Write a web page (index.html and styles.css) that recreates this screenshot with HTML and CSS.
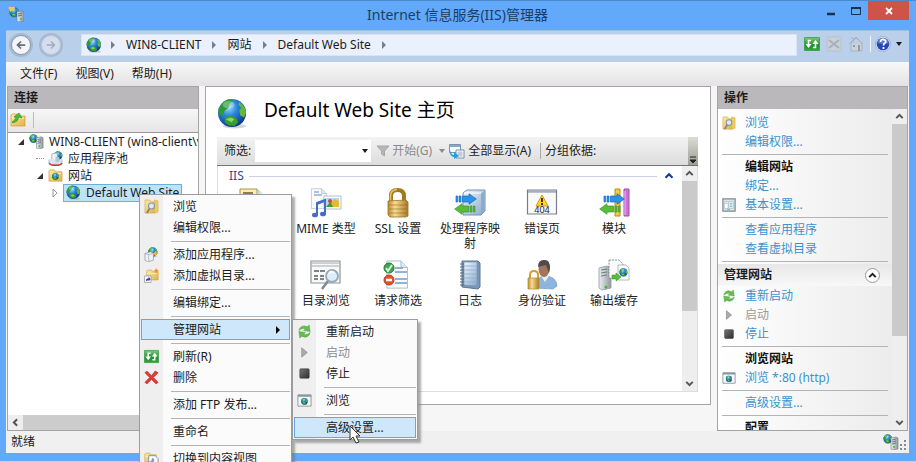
FILE: index.html
```html
<!DOCTYPE html>
<html lang="zh-CN">
<head>
<meta charset="utf-8">
<meta name="viewport" content="width=device-width, initial-scale=1">
<title>Internet 信息服务(IIS)管理器</title>
<link rel="stylesheet" href="styles.css">
</head>
<body>
<svg class="sprite" aria-hidden="true">
  <defs>
    <radialGradient id="sea" cx=".38" cy=".3" r=".75"><stop offset="0" stop-color="#9adcff"/><stop offset=".4" stop-color="#2a86dc"/><stop offset="1" stop-color="#0b2f86"/></radialGradient>
    <linearGradient id="gold" x2="1" y2="1"><stop offset="0" stop-color="#ffe9a0"/><stop offset="1" stop-color="#e0b04a"/></linearGradient>
    <linearGradient id="brass"><stop offset="0" stop-color="#b98a30"/><stop offset=".35" stop-color="#f8dc92"/><stop offset="1" stop-color="#a87a24"/></linearGradient>
    <linearGradient id="steel"><stop offset="0" stop-color="#eceff0"/><stop offset="1" stop-color="#8f999e"/></linearGradient>
    <linearGradient id="ice" x2="1" y2="1"><stop offset="0" stop-color="#f2f8fd"/><stop offset="1" stop-color="#86a8cc"/></linearGradient>
    <linearGradient id="leaf" x2="0" y2="1"><stop offset="0" stop-color="#7ccb78"/><stop offset=".6" stop-color="#1d9130"/><stop offset="1" stop-color="#2fa83a"/></linearGradient>
    <linearGradient id="coal" x2="1" y2="1"><stop offset="0" stop-color="#777"/><stop offset="1" stop-color="#2b2b2b"/></linearGradient>
  </defs>
  <symbol id="globe" viewBox="0 0 32 32">
    <ellipse cx="18" cy="29" rx="12" ry="2.500" fill="#888" opacity=".35"/>
    <circle cx="15.500" cy="15.500" r="14.500" fill="url(#sea)"/>
    <path d="M3 9Q6 2 14 1l3 2-4 3-1 4-4 3-2 5-4-1Q0 13 3 9z" fill="#2f9a35"/>
    <path d="M23 4q6 4 7 11l-2 5-4-2-1-5 2-3-3-3z" fill="#63b83b"/>
    <path d="M8 20l6-2 6 3 2 4-4 4-6-1-4-3z" fill="#379f2e"/>
    <path d="M9 22l5-2 4 2-3 3z" fill="#92d45c"/>
    <ellipse cx="12" cy="7" rx="6" ry="4" fill="#fff" opacity=".3"/>
  </symbol>
  <symbol id="server" viewBox="0 0 16 16">
    <use href="#globe" width="10" height="10"/>
    <path d="M8 4l5-1 2 1v11l-6 1-1-1z" fill="url(#steel)" stroke="#747d80" stroke-width=".6"/>
    <path d="M9 6l4-1M9 8l4-1M9 10l4-1" stroke="#5e686c" stroke-width=".8"/><circle cx="11" cy="13" r="1" fill="#3ec13a"/>
  </symbol>
  <symbol id="app" viewBox="0 0 16 16">
    <path d="M1 1l5 5" stroke="#e3b63c" stroke-width="3"/><use href="#globe" x="1" y="1" width="11" height="11"/>
    <path d="M1 1h6l-1 3-4 2z" fill="#f2c850"/><path d="M9 6l5-1 2 1v9l-6 1-1-1z" fill="url(#steel)" stroke="#727b80" stroke-width=".6"/>
    <path d="M10 8l4-1M10 10l4-1" stroke="#65707a"/><circle cx="13" cy="13" r="1" fill="#3ec13a"/>
  </symbol>
  <symbol id="pool" viewBox="0 0 16 16">
    <use href="#globe" x="6" y="0" width="10" height="10"/><path d="M4 3l5-1 1 2v8H4z" fill="#eef1f5" stroke="#8b98a8" stroke-width=".7"/>
    <path d="M1 9v4q3 3 7 1 4 2 7 0V9" fill="#d9e6f2" stroke="#91a5b9" stroke-width=".7"/><path d="M1 13q3 3 7 2 4 1 7-2" fill="none" stroke="#c8382f" stroke-width="1.500"/><path d="M8 6v6h4V7z" fill="#b4c5d5"/>
  </symbol>
  <symbol id="folder" viewBox="0 0 16 16"><path d="M1 3l1-1h5l1 2h7v10H1z" fill="url(#gold)" stroke="#cb9d3c" stroke-width=".7"/><path d="M2 6h12" stroke="#fff3c4"/></symbol>
  <symbol id="sites" viewBox="0 0 16 16"><use href="#folder" width="16" height="16"/><use href="#globe" x="4" y="5" width="8" height="8"/></symbol>
  <symbol id="connect" viewBox="0 0 16 16"><use href="#folder" width="16" height="16"/><path d="M2 10q3-1 4-5L4 5l5-4 3 5-3-1q-1 5-6 6z" fill="#4dba38" stroke="#2e8b21" stroke-width=".6"/></symbol>
  <symbol id="explore" viewBox="0 0 16 16"><path d="M1 1h5l2 2h4v12H1z" fill="url(#gold)" stroke="#cfa340" stroke-width=".6"/><path d="M11 1l4 1v12l-4 1z" fill="#efcb62" stroke="#cfa340" stroke-width=".5"/><circle cx="8" cy="7.500" r="3.200" fill="#d9edf8" stroke="#8797a2" stroke-width="1.200"/><path d="M6 10l-3 5" stroke="#76808a" stroke-width="1.800"/></symbol>
  <symbol id="addapp" viewBox="0 0 16 16"><use href="#globe" x="4" y="0" width="11" height="11"/><path d="M1 7l6-2 3 2v7l-6 2-3-2z" fill="#eef2f4" stroke="#8f9aa1" stroke-width=".8"/><path d="M1 7l4 1v7M5 8l5-1" fill="none" stroke="#a0adb6" stroke-width=".8"/><path d="M12 4l1 2 3 1-3 1-1 3-1-3-3-1 3-1z" fill="#ffb52b"/></symbol>
  <symbol id="addvdir" viewBox="0 0 16 16"><use href="#folder" x="2" y="0" width="14" height="15"/><path d="M13 0l1 2 2 1-2 1-1 2-1-2-2-1 2-1z" fill="#f78d1e"/><path d="M.500 8.500h7v7h-7z" fill="#fff" stroke="#999" stroke-width=".8"/><path d="M2 14q0-3 3-3V9l2 3-2 2v-1q-2 0-3 1z" fill="#3434c4"/></symbol>
  <symbol id="refresh" viewBox="0 0 16 16"><path d="M.500 1.500h15v13H.500z" fill="url(#leaf)" stroke="#3a9a45" stroke-width=".8"/><path d="M7 4.500H4.500V9M9 11.500h2.500V7" fill="none" stroke="#fff" stroke-width="1.600"/><path d="M1.500 8h6l-3 4zM8.500 8h6l-3-4z" fill="#fff"/></symbol>
  <symbol id="delete" viewBox="0 0 16 16"><path d="M1 3l2-2 5 5 4-5 3 2-5 5 5 5-2 2-5-5-5 5-2-2 5-5z" fill="#e43a35" stroke="#b51f20" stroke-width=".6"/></symbol>
  <symbol id="content" viewBox="0 0 16 16"><use href="#folder" width="14" height="15"/><path d="M5 5h7l3 3v7H5z" fill="#fff" stroke="#83909a"/><path d="M3 11q5 2 6-4l2 2q0 5-6 6z" fill="#63a6d8"/></symbol>
  <symbol id="restart" viewBox="0 0 16 16"><path d="M2 7q1-5 6-5l3 1 2-2 1 7-7-1 2-2q-4-1-7 2z" fill="#65bd50" stroke="#4ba13c" stroke-width=".5"/><path d="M14 9q-1 5-6 5l-3-1-2 2-1-7 7 1-2 2q4 1 7-2z" fill="#65bd50" stroke="#4ba13c" stroke-width=".5"/></symbol>
  <symbol id="play" viewBox="0 0 16 16"><path d="M5 3l6 5-6 5z" fill="#aaa" stroke="#888" stroke-width=".7"/></symbol>
  <symbol id="stop" viewBox="0 0 16 16"><rect x="3" y="3" width="10" height="10" rx="1" fill="url(#coal)" stroke="#333" stroke-width=".6"/></symbol>
  <symbol id="browse" viewBox="0 0 16 16"><path d="M1 2h14v12H1z" fill="#f7fafb" stroke="#8b959a"/><path d="M1 3h14" stroke="#8995a0" stroke-width="2"/><use href="#globe" x="4" y="5" width="8" height="8"/></symbol>
  <symbol id="settings" viewBox="0 0 16 16"><path d="M1 1h14v14H1z" fill="#dde4e7" stroke="#7f898c" stroke-width="1.400"/><path d="M3 4h4v8H3zM8 4h5v8H8z" fill="#fff" stroke="#a8b5bb" stroke-width=".7"/><path d="M4 6h2M9 6h3M9 8h3M9 10h3M6 13h3" stroke="#55aeca"/></symbol>
  <symbol id="chevron" viewBox="0 0 16 16"><path d="M4 10l4-4 4 4" fill="none" stroke="currentColor" stroke-width="2.500"/></symbol>
  <symbol id="caret" viewBox="0 0 8 8"><path d="M1 2h6L4 6z" fill="currentColor"/></symbol>
  <symbol id="crumb" viewBox="0 0 8 8"><path d="M2 0l4 4-4 4z" fill="#73808c"/></symbol>
  <symbol id="blue-arrow" viewBox="0 0 22 12"><path d="M1 3h1.500v6H1zM4 3h2v6H4zM7.500 3H14V.700L21.300 6 14 11.300V9H7.500z" fill="#2994e6" stroke="#1a6cc0" stroke-width=".7"/></symbol>
  <symbol id="green-arrow" viewBox="0 0 22 12"><path d="M21 3h-1.500v6H21zM18 3h-2v6h2zM14.500 3H8V.700L.700 6 8 11.300V9h6.500z" fill="#59bd39" stroke="#3b9629" stroke-width=".7"/></symbol>
  <symbol id="lock" viewBox="0 0 32 32"><path d="M9 15V9q0-6 6.500-6T22 9v6" fill="none" stroke="#a27b1f" stroke-width="4"/><path d="M8.500 14V9q0-6 6.500-6.500" fill="none" stroke="#e6c665" stroke-width="1.500"/><path d="M6 14l18-1 2 2v14l-2 1H8l-2-2z" fill="url(#brass)" stroke="#9b722a" stroke-width=".8"/><path d="M7 18h18M7 22h18M7 26h18" stroke="#855e16" opacity=".5"/></symbol>
  <symbol id="page" viewBox="0 0 32 32"><path d="M2 1h15l7 7v22H2z" fill="#f9fbff" stroke="#aebbc8"/><path d="M17 1v7h7" fill="#dfe8f1" stroke="#aebbc8"/></symbol>
  <symbol id="docs" viewBox="0 0 32 32"><use href="#page" x="7" width="26" height="31"/><path d="M2 2h17v25H2z" fill="#f8edb4" stroke="#a99552"/><path d="M5 6h10M5 10h11" stroke="#8f8140" stroke-width="2"/></symbol>
  <symbol id="mime" viewBox="0 0 32 32"><use href="#page" x="0" y="0" width="22" height="24"/><path d="M4 5h5M4 8h8" stroke="#8eb0da" stroke-width="1.500"/><path d="M14 9h17v13H14z" fill="#fff" stroke="#9faeba" stroke-width=".8"/><path d="M16 11h13v9H16z" fill="#b4d7ef"/><path d="M16 20l5-6 5 6z" fill="#3f9c35"/><path d="M21 16l3-4 5 2v6h-6z" fill="#e4bc2b"/><circle cx="20" cy="14" r="2" fill="#df432d"/><path d="M7 28V16l8-3v14" fill="none" stroke="#456bcb" stroke-width="2"/><path d="M7 16l8-3v2l-8 3z" fill="#456bcb"/><ellipse cx="5" cy="28" rx="3" ry="2.300" fill="#456bcb"/><ellipse cx="13" cy="27" rx="3" ry="2.300" fill="#456bcb"/></symbol>
  <symbol id="handler" viewBox="0 0 32 32"><path d="M9 6l4-3h18v21l-4 4H9z" fill="url(#ice)" stroke="#7794b2"/><path d="M27 7v20l4-4V3z" fill="#8dabca"/><path d="M10 6h17" stroke="#fff"/><use href="#blue-arrow" x="1" y="6" width="22" height="12"/><use href="#green-arrow" x="0" y="16" width="22" height="12"/></symbol>
  <symbol id="error" viewBox="0 0 32 32"><path d="M1.500 3h29v24h-29z" fill="#fafafa" stroke="#787f89" stroke-width="1.200"/><path d="M2 4.500h28" stroke="#a3adc2" stroke-width="2.500"/><path d="M16 8l6 11H10z" fill="#ffd630" stroke="#d39c11"/><path d="M16 11v4M16 16v2" stroke="#222" stroke-width="1.800"/><text class="code404" x="16" y="26" text-anchor="middle">404</text></symbol>
  <symbol id="modules" viewBox="0 0 32 32"><path d="M17 2h5v27h-5z" fill="#f5cc3a" stroke="#b58c1b"/><path d="M26 2h5v27h-5z" fill="#cf70d8" stroke="#9652a4"/><path d="M27 4v24" stroke="#f0b8f0"/><use href="#blue-arrow" x="5" y="6" width="22" height="12"/><use href="#green-arrow" x="1" y="16" width="22" height="12"/></symbol>
  <symbol id="directory" viewBox="0 0 32 32"><path d="M1 2h29v22H1z" fill="#f8f8f6" stroke="#8e9498" stroke-width="1.200"/><path d="M2 4h27M2 7h27" stroke="#bfc4c8" stroke-width="1.500"/><path d="M4 12h5M10 12h5M4 17h4M10 17h4M4 20h4M10 20h4" stroke="#555c61" stroke-width="1.500"/><path d="M18 22l-6 8" stroke="#7f8990" stroke-width="2.500"/><circle cx="22" cy="17" r="6" fill="#dceefb" stroke="#97a9b7" stroke-width="1.800"/><path d="M19 15q2-4 5-1" stroke="#fff" stroke-width="2" fill="none"/></symbol>
  <symbol id="filtering" viewBox="0 0 32 32"><use href="#page" x="3" y="0" width="30" height="32"/><path d="M13 9h8M13 13h12M13 20h12M13 24h12" stroke="#6d9ccc" stroke-width="1.500"/><circle cx="7" cy="9" r="5" fill="#42a451" stroke="#217b31"/><path d="M4 9l2 3 4-6" fill="none" stroke="#d9f5dc" stroke-width="2"/><circle cx="7" cy="21" r="5" fill="#df532e" stroke="#bf381d"/><path d="M4 21h6" stroke="#fff" stroke-width="2.500"/></symbol>
  <symbol id="log" viewBox="0 0 32 32"><path d="M8 2h16l2 2v24l-2 2-16-2z" fill="#7896b7" stroke="#5c7897"/><path d="M10 3h13v24l-13-1z" fill="url(#ice)" stroke="#7794b1" stroke-width=".7"/><path d="M10 7h13M10 11h13M10 15h13M10 19h13M10 23h13" stroke="#8facc9" stroke-width=".8"/><path d="M6 5h4M6 8h4M6 11h4M6 14h4M6 17h4M6 20h4M6 23h4M6 26h4" stroke="#53677e"/></symbol>
  <symbol id="auth" viewBox="0 0 32 32"><path d="M10 29q0-12 9-12 11 0 12 10l-4 3z" fill="#8bb5df" stroke="#7ba1cb" stroke-width=".8"/><path d="M15 17l4 6 4-6" fill="#e6eef9"/><ellipse cx="18" cy="10" rx="5.500" ry="8" fill="#a0765c"/><path d="M12 8q0-8 7-7 5 0 5 8l-1 5-3-8q-4 1-8 2z" fill="#514a49"/><path d="M4 19v-3q0-4 4-4t4 4v4" fill="none" stroke="#d1a02d" stroke-width="2"/><path d="M2 19h11v11H2z" fill="url(#brass)" stroke="#bb9237" stroke-width=".8"/></symbol>
  <symbol id="cache" viewBox="0 0 32 32"><path d="M1 9l8-2 4 2v20l-9 2-3-2z" fill="url(#steel)" stroke="#8f999e" stroke-width=".8"/><path d="M3 11l6-1M3 14l6-1M3 17l6-1" stroke="#6f7b80"/><circle cx="8" cy="28" r="1.500" fill="#3bbb35"/><path d="M11 1h10l4 4v14H11z" fill="#fafafa" stroke="#687a86" stroke-dasharray="2 1" stroke-width=".8"/><path d="M20 6h8l3 3v12H20z" fill="#fff" stroke="#9ba8b1" stroke-width=".8"/><use href="#globe" x="21" y="9" width="9" height="9"/><path d="M14 16h4v-2l5 4-5 4v-2h-4z" fill="#55bd3b" stroke="#2e8b26" stroke-width=".5"/></symbol>
  <symbol id="showall" viewBox="0 0 16 16"><path d="M.500 1.500h11v8H.500z" fill="#f6fbff" stroke="#7992ae"/><path d="M1 3h10" stroke="#8ea7c0" stroke-width="2"/><path d="M7 7h8v8H7z" fill="#fff" stroke="#798da4"/><path d="M8 10h6M8 12h6M10 8v6M12 8v6" stroke="#9cb0c5" stroke-width=".8"/><path d="M1 7q1 5 4 5V9l5 4-5 3v-2q-5-1-4-7z" fill="#269ede"/></symbol>
</svg>

<div class="window">
  <header class="titlebar">
    <svg class="icon"><use href="#app"/></svg>
    <h1>Internet 信息服务(IIS)管理器</h1>
    <div class="window-buttons">
      <button aria-label="最小化"><svg viewBox="0 0 12 12"><path d="M2 9h8" stroke="#17314f" stroke-width="2.500"/></svg></button>
      <button aria-label="最大化"><svg viewBox="0 0 12 12"><path d="M1.500 2.500h9v7h-9z" fill="none" stroke="#17314f"/><path d="M1 3h10" stroke="#17314f" stroke-width="2"/></svg></button>
      <button class="close" aria-label="关闭"><svg viewBox="0 0 12 12"><path d="M3 3l6 6M9 3L3 9" stroke="#fff" stroke-width="1.800"/></svg></button>
    </div>
  </header>

  <div class="navbar">
    <div class="history">
      <button aria-label="后退"><svg viewBox="0 0 20 20"><path d="M16 10H5M10 5l-5 5 5 5" fill="none" stroke="#666e78" stroke-width="2.500"/></svg></button>
      <button class="faded" aria-label="前进"><svg viewBox="0 0 20 20"><path d="M4 10h11M10 5l5 5-5 5" fill="none" stroke="#a2acb8" stroke-width="2"/></svg></button>
    </div>
    <nav class="address" aria-label="地址">
      <svg class="icon"><use href="#globe"/></svg>
      <svg class="crumb"><use href="#crumb"/></svg><a href="#server">WIN8-CLIENT</a>
      <svg class="crumb"><use href="#crumb"/></svg><a href="#sites">网站</a>
      <svg class="crumb"><use href="#crumb"/></svg><a href="#site">Default Web Site</a>
      <svg class="crumb"><use href="#crumb"/></svg>
    </nav>
    <div class="nav-tools">
      <button aria-label="刷新"><svg class="icon"><use href="#refresh"/></svg></button>
      <button aria-label="停止"><svg class="icon" viewBox="0 0 16 16"><path d="M1 1h14v14H1z" fill="#c8d0d8" stroke="#b7c2ce"/><path d="M3 4l10 8M13 4L3 12" stroke="#a5b0bb" stroke-width="1.800"/></svg></button>
      <button aria-label="主页"><svg class="icon" viewBox="0 0 16 16"><path d="M3 2h2v4M1 8l7-7 7 7M3 7v8h11V7L8 2z" fill="#cdd2d8" stroke="#abb4be"/><path d="M5 9h2v2H5zM10 9h2v6h-2z" fill="#8e9ba8"/></svg></button>
      <button class="help" aria-label="帮助"><svg class="icon" viewBox="0 0 16 16"><circle cx="8" cy="8" r="7.500" fill="#dfe6f4" stroke="#8b9ab5" stroke-width=".6"/><circle cx="8" cy="8" r="6.300" fill="#2447b4"/><path d="M2 7q1-5 6-5t6 5q-6 2-12 0z" fill="#7090da" opacity=".7"/><path d="M5.500 6q0-3 3-2.500 3 .500 2 3-2 1-2 3M8.500 11v2" fill="none" stroke="#fff" stroke-width="1.800"/></svg><svg class="caret"><use href="#caret"/></svg></button>
    </div>
  </div>

  <nav class="menubar" aria-label="菜单">
    <button>文件(F)</button><button>视图(V)</button><button>帮助(H)</button>
  </nav>

  <main class="workspace">
    <section class="pane connections">
      <h2 class="pane-title">连接</h2>
      <div class="pane-tools"><button aria-label="创建新连接"><svg class="icon"><use href="#connect"/></svg></button></div>
      <ul class="tree">
        <li class="level-1"><svg class="twist" viewBox="0 0 8 8"><path d="M7 1v6H1z" fill="#333"/></svg><svg class="icon"><use href="#server"/></svg><span>WIN8-CLIENT (win8-client\v</span></li>
        <li class="level-2"><i class="branch"></i><svg class="icon"><use href="#pool"/></svg><span>应用程序池</span></li>
        <li class="level-2"><svg class="twist" viewBox="0 0 8 8"><path d="M7 1v6H1z" fill="#333"/></svg><svg class="icon"><use href="#sites"/></svg><span>网站</span></li>
        <li class="level-3"><svg class="twist" viewBox="0 0 8 8"><path d="M2 0l4 4-4 4z" fill="#fff" stroke="#999"/></svg><span class="selected"><svg class="icon"><use href="#globe"/></svg>Default Web Site</span></li>
      </ul>
      <div class="hscroll"><svg class="arrow left"><use href="#chevron"/></svg><i class="thumb"></i><svg class="arrow right"><use href="#chevron"/></svg></div>
    </section>

    <section class="center">
      <div class="home">
        <div class="home-title"><svg><use href="#globe"/></svg><h2>Default Web Site 主页</h2></div>
        <div class="filterbar">
          <label for="filter">筛选:</label>
          <span class="combo"><select id="filter"><option></option></select><svg class="caret"><use href="#caret"/></svg></span>
          <button class="go" disabled><svg class="icon" viewBox="0 0 16 16"><path d="M2 3h12L9.500 8v5l-3-2V8z" fill="#b6b6b6" stroke="#a8a8a8"/></svg>开始(G)<svg class="caret"><use href="#caret"/></svg></button>
          <button class="all"><svg class="icon"><use href="#showall"/></svg>全部显示(A)</button>
          <span class="group-by">分组依据:</span>
          <i class="overflow"><svg viewBox="0 0 8 8"><path d="M1 1h6M1 4h6L4 7z" fill="#222" stroke="#222"/></svg></i>
        </div>
        <div class="features">
          <div class="feature-list">
            <h3><span>IIS</span><svg class="fold"><use href="#chevron"/></svg></h3>
            <ul class="feature-grid">
              <li><svg><use href="#docs"/></svg></li>
              <li><svg><use href="#mime"/></svg>MIME 类型</li>
              <li><svg><use href="#lock"/></svg>SSL 设置</li>
              <li><svg><use href="#handler"/></svg>处理程序映射</li>
              <li><svg><use href="#error"/></svg>错误页</li>
              <li><svg><use href="#modules"/></svg>模块</li>
              <li></li>
              <li><svg><use href="#directory"/></svg>目录浏览</li>
              <li><svg><use href="#filtering"/></svg>请求筛选</li>
              <li><svg><use href="#log"/></svg>日志</li>
              <li><svg><use href="#auth"/></svg>身份验证</li>
              <li><svg><use href="#cache"/></svg>输出缓存</li>
            </ul>
          </div>
          <div class="vscroll"><svg class="arrow"><use href="#chevron"/></svg><i class="thumb"></i><svg class="arrow down"><use href="#chevron"/></svg></div>
        </div>
      </div>
    </section>

    <section class="pane actions">
      <h2 class="pane-title">操作</h2>
      <div class="actions-body">
        <div class="action-list">
          <a class="action" href="#explore"><svg class="icon"><use href="#explore"/></svg><span>浏览</span></a>
          <a class="action" href="#permissions"><span>编辑权限...</span></a>
          <hr>
          <h3 class="action">编辑网站</h3>
          <a class="action" href="#bindings"><span>绑定...</span></a>
          <a class="action" href="#basic"><svg class="icon"><use href="#settings"/></svg><span>基本设置...</span></a>
          <hr>
          <a class="action" href="#apps"><span>查看应用程序</span></a>
          <a class="action" href="#vdirs"><span>查看虚拟目录</span></a>
          <hr>
          <h3 class="action-group">管理网站<button aria-label="折叠"><svg><use href="#chevron"/></svg></button></h3>
          <a class="action" href="#restart"><svg class="icon"><use href="#restart"/></svg><span>重新启动</span></a>
          <button class="action" disabled><svg class="icon"><use href="#play"/></svg><span>启动</span></button>
          <a class="action" href="#stop"><svg class="icon"><use href="#stop"/></svg><span>停止</span></a>
          <hr>
          <h3 class="action">浏览网站</h3>
          <a class="action" href="#http"><svg class="icon"><use href="#browse"/></svg><span>浏览 *:80 (http)</span></a>
          <hr>
          <a class="action" href="#advanced"><span>高级设置...</span></a>
          <hr>
          <h3 class="action">配置</h3>
        </div>
        <div class="vscroll"><svg class="arrow"><use href="#chevron"/></svg><i class="thumb long"></i><svg class="arrow down"><use href="#chevron"/></svg></div>
      </div>
    </section>
  </main>

  <footer class="status"><span>就绪</span><svg class="icon"><use href="#server"/></svg><svg class="grip" viewBox="0 0 8 12"><path d="M5 1h2v2H5zM5 5h2v2H5zM1 5h2v2H1zM5 9h2v2H5zM1 9h2v2H1z" fill="#888"/></svg></footer>
</div>

<div class="menu context-menu">
  <button><svg class="icon"><use href="#explore"/></svg><span>浏览</span></button>
  <button><span>编辑权限...</span></button>
  <hr>
  <button><svg class="icon"><use href="#addapp"/></svg><span>添加应用程序...</span></button>
  <button><svg class="icon"><use href="#addvdir"/></svg><span>添加虚拟目录...</span></button>
  <hr>
  <button><span>编辑绑定...</span></button>
  <hr>
  <div class="has-submenu">
    <button class="active"><span>管理网站</span><svg class="more" viewBox="0 0 8 8"><path d="M2 0l4 4-4 4z"/></svg></button>
    <div class="menu submenu">
      <button><svg class="icon"><use href="#restart"/></svg><span>重新启动</span></button>
      <button disabled><svg class="icon"><use href="#play"/></svg><span>启动</span></button>
      <button><svg class="icon"><use href="#stop"/></svg><span>停止</span></button>
      <hr>
      <button><svg class="icon"><use href="#browse"/></svg><span>浏览</span></button>
      <hr>
      <button class="active"><span>高级设置...</span></button>
      <svg class="pointer" viewBox="0 0 12 20"><path d="M1 1v14l3-3 3 6 3-1-3-6h4z" fill="#fff" stroke="#333"/></svg>
    </div>
  </div>
  <hr>
  <button><svg class="icon"><use href="#refresh"/></svg><span>刷新(R)</span></button>
  <button><svg class="icon"><use href="#delete"/></svg><span>删除</span></button>
  <hr>
  <button><span>添加 FTP 发布...</span></button>
  <hr>
  <button><span>重命名</span></button>
  <hr>
  <button><svg class="icon"><use href="#content"/></svg><span>切换到内容视图</span></button>
</div>
</body>
</html>
```
FILE: styles.css
```css
* { box-sizing: border-box; }

body {
  margin: 0;
  height: 100vh;
  overflow: hidden;
  position: relative;
  background: #c6d3e0;
  color: #1c1c1c;
  font: 12px/16px "Noto Sans", "Noto Sans CJK SC", sans-serif;
}

h1, h2, h3, ul { margin: 0; padding: 0; font: inherit; list-style: none; }
button { border: 0; padding: 0; background: none; color: inherit; font: inherit; }
a { color: inherit; text-decoration: none; }
svg { display: block; flex: none; }
.sprite { position: absolute; width: 0; height: 0; }
.icon { width: 16px; height: 16px; }
.caret { width: 8px; height: 8px; }

.window {
  display: flex;
  flex-direction: column;
  height: calc(100vh - 1px);
  padding: 0 7px 8px 6px;
  background: #62a8fb;
  border-top: 1px solid #4d89c8;
}

.titlebar {
  display: grid;
  grid-template-columns: 90px 1fr 90px;
  flex: none;
  height: 29px;
  color: #1d3d63;
}
.titlebar .icon { margin: 5px 0 0 2px; }
.titlebar h1 { font-size: 14px; line-height: 28px; text-align: center; }
.window-buttons { display: flex; justify-content: flex-end; height: 19px; }
.window-buttons button { display: grid; place-items: center; width: 26px; }
.window-buttons svg { width: 12px; height: 12px; }
.window-buttons .close { width: 43px; background: #d0534a; }

.navbar {
  display: flex;
  align-items: center;
  flex: none;
  height: 32px;
  padding-bottom: 4px;
  background: #bacfea;
  border-top: 1px solid #a2bddd;
}
.history {
  display: flex;
  gap: 8px;
  width: 75px;
  padding: 3px 5px;
}
.history button {
  display: grid;
  place-items: center;
  width: 20px;
  height: 20px;
  border: 1px solid #8c98a6;
  border-radius: 50%;
  background: #f3f5f8;
  box-shadow: 0 0 0 2px #a4b9d2;
}
.history svg { width: 14px; height: 14px; }
.history .faded { margin-left: 2px; border-color: #bdc8d5; background: #d3dfee; }
.address {
  display: flex;
  align-items: center;
  flex: 1;
  height: 22px;
  padding: 0 4px;
  background: #eaf1fc;
  border: 1px solid #d9e4f3;
}
.crumb { width: 8px; height: 8px; margin: 0 9px; }
.address .icon + .crumb { margin-left: 7px; }
.nav-tools { display: flex; align-items: center; gap: 6px; padding: 0 6px 2px 7px; }
.nav-tools .help { display: flex; align-items: center; gap: 4px; padding-left: 4px; border-left: 1px solid #eef4fb; }

.menubar {
  display: flex;
  flex: none;
  gap: 18px;
  height: 24px;
  padding: 0 14px;
  background: linear-gradient(#f8f8f8, #e4e2e4);
}

.workspace {
  display: flex;
  flex: 1;
  min-height: 0;
  gap: 6px;
  padding: 0 1px;
  background: #f6f6f7;
}
.pane {
  display: flex;
  flex-direction: column;
  flex: none;
  overflow: hidden;
  background: #fff;
  border: 1px solid #a4a4a4;
}
.connections { width: 192px; }
.actions { width: 191px; }
.pane-title {
  flex: none;
  height: 22px;
  padding: 0 6px;
  background: #bab8ba;
  font-weight: bold;
  line-height: 22px;
}
.pane-tools {
  flex: none;
  height: 24px;
  padding: 3px 2px;
  background: linear-gradient(#f7f7f7, #e7e5e7);
  border-bottom: 1px solid #999;
}
.pane-tools button { padding-right: 7px; border-right: 1px solid #bbb; }
.tree { flex: 1; line-height: 17px; white-space: nowrap; }
.tree li { display: flex; align-items: center; height: 17px; gap: 4px; }
.twist { width: 8px; height: 8px; }
.level-1 { padding-left: 9px; }
.level-2 { padding-left: 28px; }
.level-3 { padding-left: 43px; }
.tree .icon { width: 15px; height: 15px; }
.tree li > .icon + span { margin-left: 1px; }
.branch { width: 8px; border-top: 1px dotted #999; }
.selected {
  display: flex;
  align-items: center;
  gap: 5px;
  height: 18px;
  padding: 0 2px;
  background: #bee3f5;
  border: 1px solid #6faed9;
}
.hscroll { display: flex; flex: none; height: 15px; background: #eee; }
.arrow { width: 15px; height: 15px; padding: 1px; color: #555; }
.arrow.left { transform: rotate(-90deg); }
.arrow.right { transform: rotate(90deg); }
.arrow.down { transform: rotate(180deg); }
.hscroll .thumb { width: 124px; margin-right: auto; background: #ccc; }

.center { flex: 1; min-width: 0; padding-bottom: 26px; }
.home {
  display: flex;
  flex-direction: column;
  height: 100%;
  padding: 11px 12px 12px 11px;
  background: #fff;
  border: 1px solid #a4a4a4;
}
.home-title { display: flex; flex: none; gap: 16px; height: 39px; }
.home-title svg { width: 31px; height: 31px; }
.home-title h2 { font-size: 19px; line-height: 24px; color: #000; }
.filterbar {
  display: flex;
  align-items: center;
  flex: none;
  height: 29px;
  padding-left: 7px;
  background: linear-gradient(#f4f3f4, #deddde);
  border-bottom: 1px solid #74727c;
  white-space: nowrap;
}
.combo { display: flex; align-items: center; width: 116px; height: 22px; margin-left: 4px; background: #fff; }
.combo select { flex: 1; height: 100%; border: 0; background: none; appearance: none; }
.combo .caret { margin-right: 2px; }
.filterbar button { display: flex; align-items: center; }
.go { gap: 1px; margin-left: 4px; color: #8a8a8a; }
.go .caret { margin-left: 5px; }
.all { gap: 3px; margin-left: 3px; padding-right: 9px; border-right: 1px solid #aaa; }
.group-by { margin-left: 4px; }
.overflow { align-self: stretch; display: flex; align-items: flex-end; width: 10px; margin-left: auto; padding: 1px; background: linear-gradient(#dcdcd5, #9c9e90); }
.overflow svg { width: 8px; height: 8px; }
.features { display: flex; flex: 1; min-height: 0; border: 1px solid #ddd; border-top: 0; }
.feature-list { flex: 1; min-width: 0; overflow: hidden; }
.feature-list h3 { display: flex; align-items: center; gap: 5px; height: 20px; padding: 0 6px 0 11px; color: #2b4b90; }
.feature-list h3::after { content: ""; order: 1; flex: 1; border-top: 1px solid #ccd0e4; }
.fold { order: 2; width: 14px; height: 14px; color: #173e9b; }
.feature-grid { display: grid; grid-template-columns: repeat(auto-fill, 72px); grid-auto-rows: 72px; text-align: center; line-height: 15px; }
.feature-grid svg { width: 32px; height: 32px; margin: 1px auto 2px; }
.feature-grid li { padding: 0 5px; color: #222; }
.code404 { font: 9px "Noto Sans", sans-serif; fill: #222; }
.vscroll { display: flex; flex-direction: column; flex: none; width: 15px; background: #eee; }
.vscroll .thumb { height: 130px; margin-bottom: auto; background: #cacaca; }
.vscroll .thumb.long { height: 212px; }

.actions-body { display: flex; flex: 1; min-height: 0; }
.action-list { flex: 1; min-width: 0; padding-top: 4px; overflow: hidden; background: linear-gradient(90deg, #fff, #ececec); }
.action { display: flex; align-items: center; width: 100%; height: 19px; padding-left: 27px; color: #3c92ce; }
.action .icon { width: 14px; height: 14px; margin: 0 9px 0 -23px; }
h3.action { font-weight: bold; color: #111; }
.action:disabled { color: #999; }
.action-list hr { height: 1px; margin: 3px 4px 2px; border: 0; background: #b4b4b4; }
.action-group { display: flex; align-items: center; justify-content: space-between; height: 22px; padding: 0 12px 0 6px; background: linear-gradient(#e7e7e7, #f8f8f8); font-weight: bold; }
.action-group button { width: 15px; height: 15px; border: 1px solid #999; border-radius: 50%; background: #fff; color: #222; }
.action-group svg { width: 13px; height: 13px; }

.status { display: flex; align-items: center; flex: none; height: 22px; padding: 0 2px 0 5px; background: #f0f0f0; }
.status span { margin-right: auto; }
.grip { width: 8px; height: 12px; margin-top: 6px; }

.menu {
  position: absolute;
  z-index: 1;
  padding: 1px;
  background: linear-gradient(90deg, #efeff0 23px, #fbfbfc 23px);
  border: 1px solid #9c9ca0;
  box-shadow: 3px 3px 2px #7779;
}
.context-menu { left: 139px; top: 194px; width: 153px; }
.submenu { left: 151px; top: 0; width: 126px; }
.has-submenu { position: relative; }
.menu button { display: flex; align-items: center; width: 100%; height: 21px; padding-left: 32px; white-space: nowrap; }
.menu .icon { width: 15px; height: 15px; margin: 0 14px 0 -29px; }
.menu button:disabled { color: #8b8b8b; }
.menu .active { padding-left: 31px; background: #cfe7fb; border: 1px solid #68a6dc; }
.menu hr { height: 1px; margin: 3px 0 2px 30px; border: 0; background: #b4b4b4; }
.more { width: 8px; height: 8px; margin: 0 7px 0 auto; }
.pointer { position: absolute; left: 56px; top: 105px; width: 12px; height: 20px; }
```
